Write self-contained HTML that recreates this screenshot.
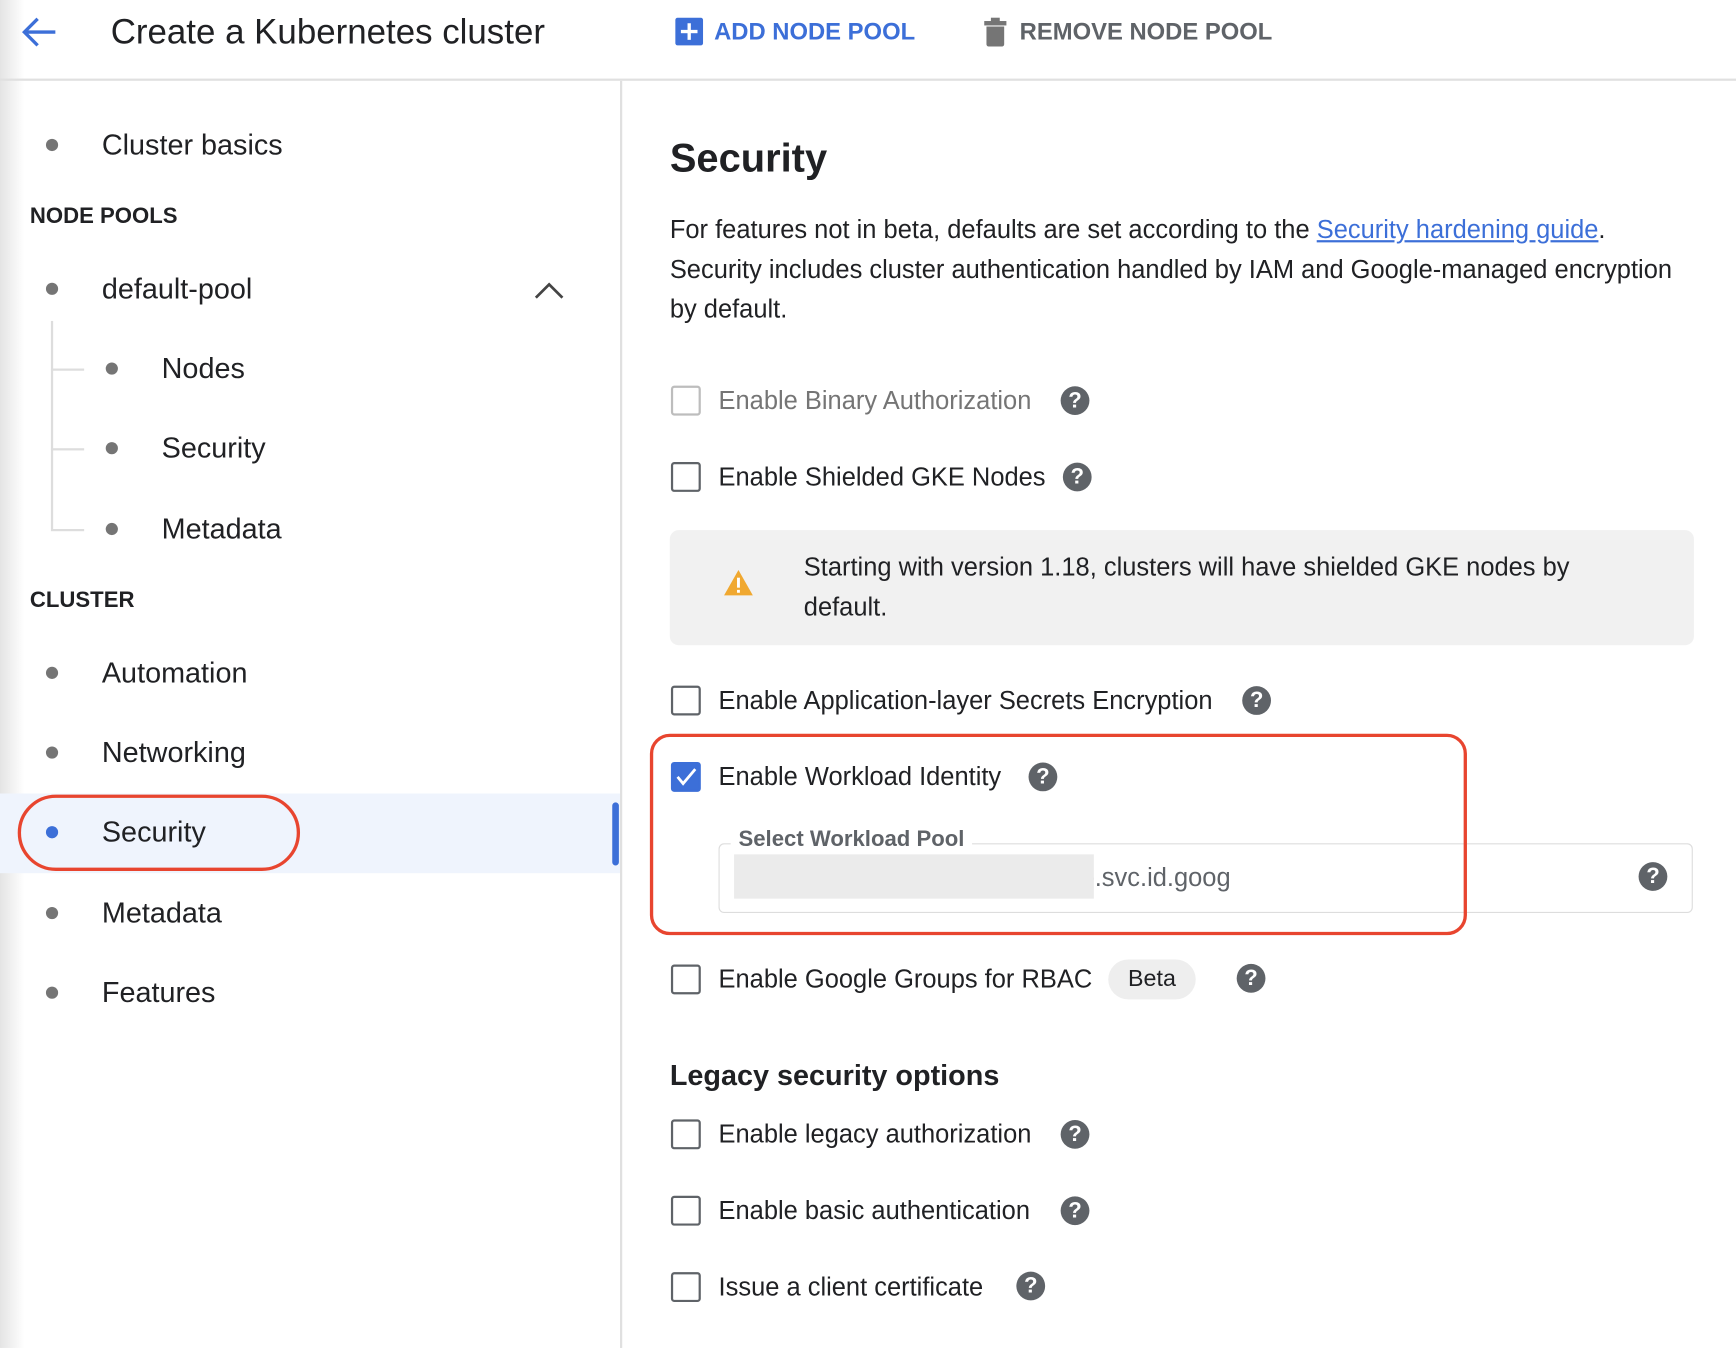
<!DOCTYPE html>
<html><head><meta charset="utf-8"><style>
*{margin:0;padding:0;box-sizing:border-box}
html,body{width:1736px;height:1348px;overflow:hidden;background:#fff}
#w{position:absolute;left:0;top:0;width:1568px;height:1218px;transform:scale(1.10714,1.1067);transform-origin:0 0;font-family:"Liberation Sans",Arial,sans-serif;color:#202124}
.a{position:absolute;white-space:nowrap}
.t{transform:translateY(-50%)}
.nav{font-size:26px}
.dot{position:absolute;width:11px;height:11px;border-radius:50%;background:#757575;transform:translate(-50%,-50%)}
.cb{position:absolute;width:27px;height:27px;border:2.5px solid #5f6368;border-radius:3px;left:606px;transform:translateY(-50%)}
.lbl{position:absolute;left:649px;font-size:23px;transform:translateY(-50%);white-space:nowrap;color:#202124}
.h{position:absolute;width:26px;height:26px;border-radius:50%;background:#5f6368;color:#fff;font-size:20px;font-weight:bold;text-align:center;line-height:26px;transform:translate(-50%,-50%)}
</style></head><body><div id="w">
<div class="a" style="left:0;top:0;width:22px;height:1218px;background:linear-gradient(90deg,#e4e4e4,#fff)"></div>
<div class="a" style="left:0;top:71px;width:1568px;height:2px;background:#e0e0e0"></div>
<div class="a" style="left:560px;top:73px;width:1.5px;height:1145px;background:#e0e0e0"></div>
<svg class="a" style="left:18px;top:14px" width="34" height="30" viewBox="0 0 34 30"><path d="M32 15H4M16 3L4 15l12 12" stroke="#3c6fd8" stroke-width="3" fill="none"/></svg>
<div class="a t" style="left:100px;top:29px;font-size:31.5px">Create a Kubernetes cluster</div>
<div class="a" style="left:610px;top:16px;width:25px;height:25px;background:#3c6fd8;border-radius:2px"></div>
<div class="a" style="left:621px;top:21px;width:3px;height:15px;background:#fff"></div>
<div class="a" style="left:615px;top:27px;width:15px;height:3px;background:#fff"></div>
<div class="a t" style="left:645px;top:29px;font-size:21.5px;font-weight:bold;color:#3c6fd8">ADD NODE POOL</div>
<div class="a" style="left:889px;top:19px;width:20px;height:4px;background:#757575"></div>
<div class="a" style="left:895px;top:16px;width:8px;height:4px;background:#757575"></div>
<div class="a" style="left:891px;top:24px;width:16px;height:18px;background:#757575;border-radius:0 0 2px 2px"></div>
<div class="a t" style="left:921px;top:29px;font-size:21.5px;font-weight:bold;color:#5f6368">REMOVE NODE POOL</div>

<div class="a" style="left:0;top:717px;width:560px;height:72px;background:#eff4fd"></div>
<div class="a" style="left:553px;top:725px;width:6px;height:57px;background:#3c6fd8;border-radius:3px"></div>
<div class="a" style="left:16px;top:718px;width:255px;height:69px;border:3px solid #e8452f;border-radius:35px"></div>

<div class="dot" style="left:47px;top:131px"></div><div class="a t nav" style="left:92px;top:131px">Cluster basics</div>
<div class="a t" style="left:27px;top:196px;font-size:20px;font-weight:bold;color:#202124">NODE POOLS</div>
<div class="dot" style="left:47px;top:261px"></div><div class="a t nav" style="left:92px;top:261px">default-pool</div>
<svg class="a" style="left:482px;top:253px" width="28" height="18"><path d="M2 16L14 4l12 12" stroke="#444" stroke-width="2.5" fill="none"/></svg>
<div class="a" style="left:46px;top:290px;width:1.5px;height:188px;background:#ddd"></div>
<div class="a" style="left:46px;top:333px;width:30px;height:1.5px;background:#ddd"></div>
<div class="a" style="left:46px;top:405px;width:30px;height:1.5px;background:#ddd"></div>
<div class="a" style="left:46px;top:478px;width:30px;height:1.5px;background:#ddd"></div>
<div class="dot" style="left:101px;top:333px"></div><div class="a t nav" style="left:146px;top:333px">Nodes</div>
<div class="dot" style="left:101px;top:405px"></div><div class="a t nav" style="left:146px;top:405px">Security</div>
<div class="dot" style="left:101px;top:478px"></div><div class="a t nav" style="left:146px;top:478px">Metadata</div>
<div class="a t" style="left:27px;top:543px;font-size:20px;font-weight:bold">CLUSTER</div>
<div class="dot" style="left:47px;top:608px"></div><div class="a t nav" style="left:92px;top:608px">Automation</div>
<div class="dot" style="left:47px;top:680px"></div><div class="a t nav" style="left:92px;top:680px">Networking</div>
<div class="dot" style="left:47px;top:752px;background:#3c6fd8"></div><div class="a t nav" style="left:92px;top:752px">Security</div>
<div class="dot" style="left:47px;top:825px"></div><div class="a t nav" style="left:92px;top:825px">Metadata</div>
<div class="dot" style="left:47px;top:897px"></div><div class="a t nav" style="left:92px;top:897px">Features</div>

<div class="a t" style="left:605px;top:143px;font-size:36px;font-weight:bold">Security</div>
<div class="a" style="left:605px;top:189px;font-size:23px;line-height:36px">For features not in beta, defaults are set according to the <span style="color:#3c6fd8;text-decoration:underline">Security hardening guide</span>.<br>Security includes cluster authentication handled by IAM and Google-managed encryption<br>by default.</div>

<div class="cb" style="top:362px;border-color:#bdbdbd"></div><div class="lbl" style="top:362px;color:#757575">Enable Binary Authorization</div><div class="h" style="left:971px;top:362px">?</div>
<div class="cb" style="top:431px"></div><div class="lbl" style="top:431px">Enable Shielded GKE Nodes</div><div class="h" style="left:973px;top:431px">?</div>
<div class="a" style="left:605px;top:479px;width:925px;height:104px;background:#f1f1f1;border-radius:8px"></div>
<svg class="a" style="left:653px;top:514px" width="28" height="25"><path d="M14 1L27 24H1z" fill="#f0a830"/><rect x="12.7" y="8" width="2.6" height="9" fill="#fff"/><rect x="12.7" y="19" width="2.6" height="2.6" fill="#fff"/></svg>
<div class="a" style="left:726px;top:494px;font-size:23px;line-height:36px">Starting with version 1.18, clusters will have shielded GKE nodes by<br>default.</div>
<div class="cb" style="top:633px"></div><div class="lbl" style="top:633px">Enable Application-layer Secrets Encryption</div><div class="h" style="left:1135px;top:633px">?</div>
<div class="cb" style="top:702px;background:#3c6fd8;border-color:#3c6fd8"></div>
<svg class="a" style="left:609px;top:691px" width="22" height="22"><path d="M3 11l5 6L19 4" stroke="#fff" stroke-width="2.5" fill="none"/></svg>
<div class="lbl" style="top:702px">Enable Workload Identity</div><div class="h" style="left:942px;top:702px">?</div>
<div class="a" style="left:649px;top:762px;width:880px;height:63px;border:1.5px solid #ddd;border-radius:5px"></div>
<div class="a t" style="left:660px;top:759px;font-size:20px;font-weight:bold;color:#5f6368;background:#fff;padding:0 7px">Select Workload Pool</div>
<div class="a t" style="left:976px;top:793px;font-size:23px;color:#5f6368">e.svc.id.goog</div>
<div class="a" style="left:663px;top:772px;width:325px;height:40px;background:#ebebeb"></div>
<div class="h" style="left:1493px;top:792px">?</div>
<div class="a" style="left:587px;top:663px;width:738px;height:182px;border:3px solid #e8452f;border-radius:18px"></div>
<div class="cb" style="top:885px"></div><div class="lbl" style="top:885px">Enable Google Groups for RBAC</div>
<div class="a" style="left:1001px;top:867px;width:79px;height:36px;background:#eee;border-radius:18px;font-size:21px;text-align:center;line-height:36px">Beta</div>
<div class="h" style="left:1130px;top:884px">?</div>
<div class="a t" style="left:605px;top:972px;font-size:26px;font-weight:bold">Legacy security options</div>
<div class="cb" style="top:1025px"></div><div class="lbl" style="top:1025px">Enable legacy authorization</div><div class="h" style="left:971px;top:1025px">?</div>
<div class="cb" style="top:1094px"></div><div class="lbl" style="top:1094px">Enable basic authentication</div><div class="h" style="left:971px;top:1094px">?</div>
<div class="cb" style="top:1163px"></div><div class="lbl" style="top:1163px">Issue a client certificate</div><div class="h" style="left:931px;top:1162px">?</div>
</div></body></html>
